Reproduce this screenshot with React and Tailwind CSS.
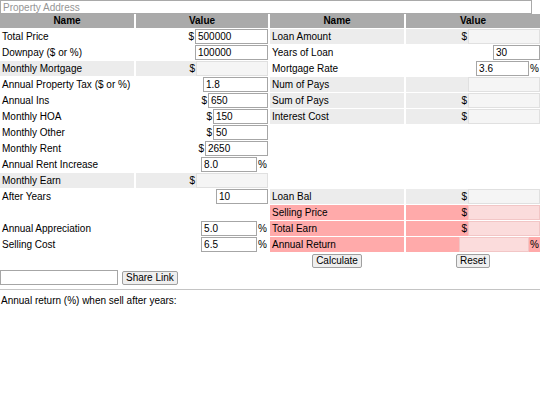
import React from "react";

const GREY = "bg-[#ececec]";
const PINK = "bg-[#ffaaaa]";

function Inp({ value = "", w = "w-[73px]", kind = "normal" }) {
  const k =
    kind === "ro"
      ? "bg-[#f5f5f5] border-[#e0e0e0]"
      : kind === "pink"
      ? "bg-[#fbdcdc] border-[#f2c6c6]"
      : "bg-white border-[#a6a6a6]";
  return (
    <input
      readOnly
      defaultValue={value}
      className={`h-[15px] ${w} border ${k} px-[2px] text-[10px] leading-[13px] text-black outline-none`}
    />
  );
}

function Label({ children, bg = "" }) {
  return (
    <div className={`h-[15px] flex items-center pl-[2px] whitespace-nowrap ${bg}`}>
      {children}
    </div>
  );
}

function Val({ bg = "", dollar, pct, children }) {
  return (
    <div className={`h-[15px] flex items-center justify-end ${bg}`}>
      {dollar && <span className="pr-[1px]">$</span>}
      {children}
      {pct && <span className="pl-[1px] pr-[1px]">%</span>}
    </div>
  );
}

function Empty() {
  return <div className="h-[15px]" />;
}

function Btn({ children }) {
  return (
    <button className="h-[14px] px-[3px] bg-[#efefef] border border-[#a0a0a0] rounded-[2px] text-[10px] leading-[12px] text-black">
      {children}
    </button>
  );
}

export default function App() {
  return (
    <div className="w-[540px] h-[405px] bg-white text-[10px] text-black font-['Liberation_Sans',Arial,sans-serif] overflow-hidden">
      <input
        placeholder="Property Address"
        className="block h-[14px] w-[532px] border border-[#a9a9a9] px-[2px] text-[10px] leading-[12px] placeholder:text-[#959595] outline-none"
      />
      <div className="grid grid-cols-[134px_132px_134px_134px] gap-x-[2px] gap-y-[1px]">
        <div className="h-[14px] bg-[#aaaaaa] font-bold text-center leading-[14px]">Name</div>
        <div className="h-[14px] bg-[#aaaaaa] font-bold text-center leading-[14px]">Value</div>
        <div className="h-[14px] bg-[#aaaaaa] font-bold text-center leading-[14px]">Name</div>
        <div className="h-[14px] bg-[#aaaaaa] font-bold text-center leading-[14px]">Value</div>

        {/* row 1 */}
        <Label>Total Price</Label>
        <Val dollar><Inp value="500000" /></Val>
        <Label bg={GREY}>Loan Amount</Label>
        <Val bg={GREY} dollar><Inp kind="ro" w="w-[72px]" /></Val>

        {/* row 2 */}
        <Label>Downpay ($ or %)</Label>
        <Val><Inp value="100000" /></Val>
        <Label>Years of Loan</Label>
        <Val><Inp value="30" w="w-[47px]" /></Val>

        {/* row 3 */}
        <Label bg={GREY}>Monthly Mortgage</Label>
        <Val bg={GREY} dollar><Inp kind="ro" w="w-[72px]" /></Val>
        <Label>Mortgage Rate</Label>
        <Val pct><Inp value="3.6" w="w-[53px]" /></Val>

        {/* row 4 */}
        <Label>Annual Property Tax ($ or %)</Label>
        <Val><Inp value="1.8" w="w-[65px]" /></Val>
        <Label bg={GREY}>Num of Pays</Label>
        <Val bg={GREY}><Inp kind="ro" w="w-[72px]" /></Val>

        {/* row 5 */}
        <Label>Annual Ins</Label>
        <Val dollar><Inp value="650" w="w-[60px]" /></Val>
        <Label bg={GREY}>Sum of Pays</Label>
        <Val bg={GREY} dollar><Inp kind="ro" w="w-[72px]" /></Val>

        {/* row 6 */}
        <Label>Monthly HOA</Label>
        <Val dollar><Inp value="150" w="w-[55px]" /></Val>
        <Label bg={GREY}>Interest Cost</Label>
        <Val bg={GREY} dollar><Inp kind="ro" w="w-[72px]" /></Val>

        {/* row 7 */}
        <Label>Monthly Other</Label>
        <Val dollar><Inp value="50" w="w-[55px]" /></Val>
        <Empty />
        <Empty />

        {/* row 8 */}
        <Label>Monthly Rent</Label>
        <Val dollar><Inp value="2650" w="w-[63px]" /></Val>
        <Empty />
        <Empty />

        {/* row 9 */}
        <Label>Annual Rent Increase</Label>
        <Val pct><Inp value="8.0" w="w-[56px]" /></Val>
        <Empty />
        <Empty />

        {/* row 10 */}
        <Label bg={GREY}>Monthly Earn</Label>
        <Val bg={GREY} dollar><Inp kind="ro" w="w-[72px]" /></Val>
        <Empty />
        <Empty />

        {/* row 11 */}
        <Label>After Years</Label>
        <Val><Inp value="10" w="w-[52px]" /></Val>
        <Label bg={GREY}>Loan Bal</Label>
        <Val bg={GREY} dollar><Inp kind="ro" w="w-[72px]" /></Val>

        {/* row 12 */}
        <Empty />
        <Empty />
        <Label bg={PINK}>Selling Price</Label>
        <Val bg={PINK} dollar><Inp kind="pink" w="w-[72px]" /></Val>

        {/* row 13 */}
        <Label>Annual Appreciation</Label>
        <Val pct><Inp value="5.0" w="w-[56px]" /></Val>
        <Label bg={PINK}>Total Earn</Label>
        <Val bg={PINK} dollar><Inp kind="pink" w="w-[72px]" /></Val>

        {/* row 14 */}
        <Label>Selling Cost</Label>
        <Val pct><Inp value="6.5" w="w-[56px]" /></Val>
        <Label bg={PINK}>Annual Return</Label>
        <Val bg={PINK} pct><Inp kind="pink" w="w-[70px]" /></Val>

        {/* row 15 */}
        <Empty />
        <Empty />
        <div className="h-[15px] flex items-center justify-center"><Btn>Calculate</Btn></div>
        <div className="h-[15px] flex items-center justify-center"><Btn>Reset</Btn></div>
      </div>

      <div className="mt-[2px] flex items-center gap-[4px]">
        <input className="h-[15px] w-[118px] border border-[#a6a6a6] px-[2px] text-[10px] outline-none" />
        <Btn>Share Link</Btn>
      </div>
      <div className="mt-[4px] h-px bg-[#c4c4c4]" />
      <div className="mt-[5px] pl-[1px] leading-[12px]">Annual return (%) when sell after years:</div>
    </div>
  );
}
